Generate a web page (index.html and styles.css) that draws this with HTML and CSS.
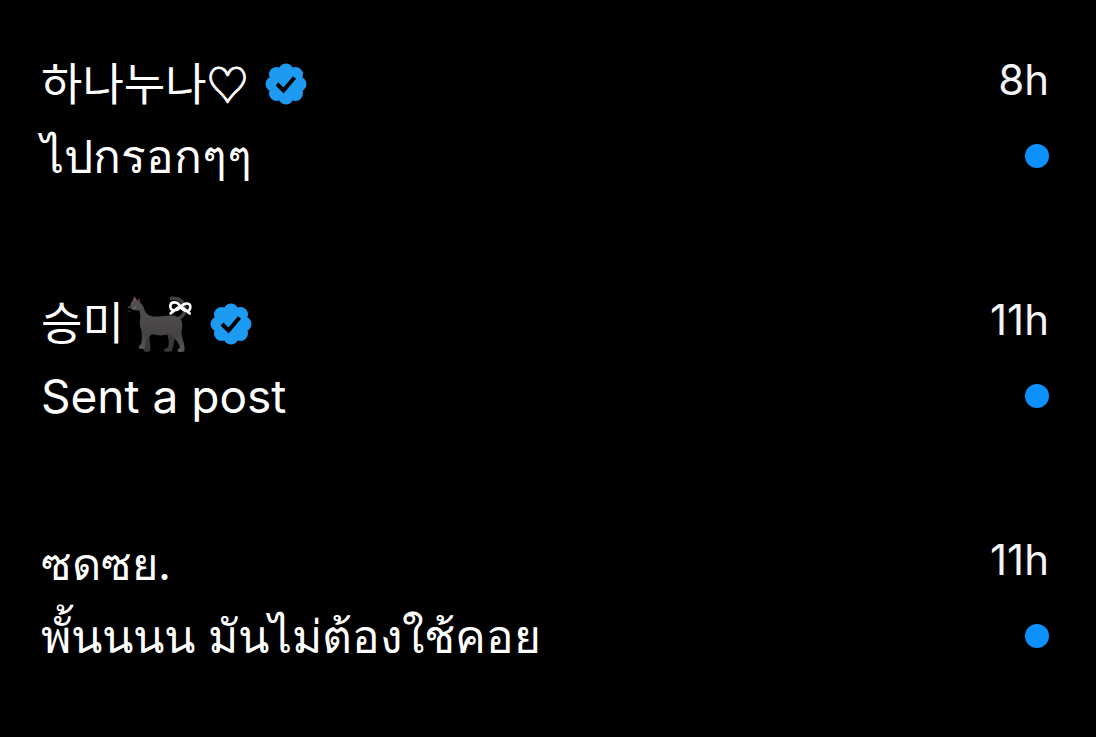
FILE: index.html
```html
<!DOCTYPE html>
<html lang="th">
<head>
  <meta charset="UTF-8">
  <meta name="viewport" content="width=device-width, initial-scale=1">
  <title>Messages</title>
  <link rel="stylesheet" href="styles.css">
</head>
<body>

<svg class="defs" aria-hidden="true">
  <symbol id="verified" viewBox="0 0 42 42">
    <g fill="#1d9bf0">
      <circle cx="21" cy="21" r="17"/>
      <circle cx="21" cy="8" r="7.500"/>
      <circle cx="30.500" cy="11.500" r="7.500"/>
      <circle cx="34" cy="21" r="7.500"/>
      <circle cx="30.500" cy="30.500" r="7.500"/>
      <circle cx="21" cy="34" r="7.500"/>
      <circle cx="11.500" cy="30.500" r="7.500"/>
      <circle cx="8" cy="21" r="7.500"/>
      <circle cx="11.500" cy="11.500" r="7.500"/>
    </g>
    <path d="M12 21l6.500 6.500L29.500 14.500" fill="none" stroke="#000" stroke-width="4"/>
  </symbol>
</svg>

<main class="chats">
  <article class="chat">
    <h2 class="name">
      <span>하나누나<span class="heart">♡</span></span>
      <svg class="badge" role="img" aria-label="Verified"><use href="#verified"/></svg>
    </h2>
    <time class="time">8h</time>
    <p class="preview">ไปกรอกๆๆ</p>
    <span class="unread"></span>
  </article>

  <article class="chat">
    <h2 class="name">
      <span class="with-cat">승미
        <svg class="cat" viewBox="12 30 210 180" role="img" aria-label="Black cat">
          <defs>
            <linearGradient id="fur" x1="0" y1="0" x2="0" y2="1">
              <stop offset="0" stop-color="#535152"/>
              <stop offset=".45" stop-color="#4b494a"/>
              <stop offset=".7" stop-color="#454344"/>
              <stop offset="1" stop-color="#5c5a5b"/>
            </linearGradient>
          </defs>
          <path d="M174 104c16-6 24-20 20-36-5-17-20-27-40-25" fill="none" stroke="#434142" stroke-width="11" stroke-linecap="round"/>
          <!-- far legs -->
          <path d="M66 145c6 16 10 32 7 46-2 3-4 6-2 9 4 4 16 4 20 0 1-18-4-36-2-55z" fill="#3b393a"/>
          <path d="M138 138c4 16 12 32 6 52-3 3-12 5-12 10 2 5 20 4 24 0 4-16 8-32 12-50z" fill="#3b393a"/>
          <path d="M40 48l4-10 8 12c14 6 20 20 23 32 4 8 10 12 18 14 22 5 48-4 70-1 16 3 24 13 24 30 0 10-4 18-2 28 2 12 7 20 8 34 1 6 1 10 0 14-4 4-20 4-21-1 0-4 4-7 8-9-2-15-18-27-26-43-18 7-38 8-56 3-8 3-16 8-19 15-3 9-3 16-5 26-4 5-18 4-18-2 0-4 4-7 7-9 4-16 3-28 1-42-6-15-5-28-3-43l-3-17c-9 1-21 0-26-6-3-8 0-19 8-26z" fill="url(#fur)"/>
          <path d="M39 52l3-15 9 13z" fill="#85505a"/>
          <path d="M52 51l6-9 3 18z" fill="#5f4349"/>
          <path d="M25 69l6 1M41 73l6-2" stroke="#969188" stroke-width="3"/>
          <path d="M22 82l14 2" stroke="#292728" stroke-width="3"/>
          <path d="M182 69c-8-18-30-18-31-3-1 17 19 17 31 3 11-14 29-14 29 0 0 17-18 15-29 0M180 66l-28 22M181 66l28 22" fill="none" stroke="#fff" stroke-width="8" stroke-linecap="round"/>
        </svg>
      </span>
      <svg class="badge" role="img" aria-label="Verified"><use href="#verified"/></svg>
    </h2>
    <time class="time">11h</time>
    <p class="preview">Sent a post</p>
    <span class="unread"></span>
  </article>

  <article class="chat">
    <h2 class="name">ซดซย.</h2>
    <time class="time">11h</time>
    <p class="preview">พั้นนนน มันไม่ต้องใช้คอย</p>
    <span class="unread"></span>
  </article>
</main>

</body>
</html>
```
FILE: styles.css
```css
* { box-sizing: border-box; }
body {
  margin: 0;
  background: #000;
  color: #fff;
  font-family: Inter, "Noto Sans CJK KR", sans-serif;
  font-size: 46px;
}
.defs {
  display: none;
}
.chats {
  padding: 48px 47px 0 41px;
}
.chat {
  display: grid;
  grid-template-columns: 1fr auto;
  grid-template-rows: 72px 72px;
  align-items: center;
  margin-bottom: 96px;
}
.name {
  display: flex;
  align-items: center;
  gap: 16px;
  margin: 0;
  font-size: 45px;
  font-weight: 400;
  line-height: 74px;
}
.heart {
  font-family: "Noto Sans CJK KR", sans-serif;
  font-size: 42px;
  -webkit-text-stroke: 1px #fff;
}
.badge {
  width: 42px;
  height: 42px;
}
.with-cat {
  display: flex;
  align-items: center;
}
.cat {
  width: 70px;
  height: 60px;
}
.time {
  justify-self: end;
  color: #f2f3f5;
  font-size: 42px;
  font-weight: 400;
  line-height: 64px;
  padding-bottom: 8px;
}
.preview {
  margin: 0;
  line-height: 72px;
}
.unread {
  justify-self: end;
  width: 24px;
  height: 24px;
  border-radius: 50%;
  background: #0a91ff;
}
```
